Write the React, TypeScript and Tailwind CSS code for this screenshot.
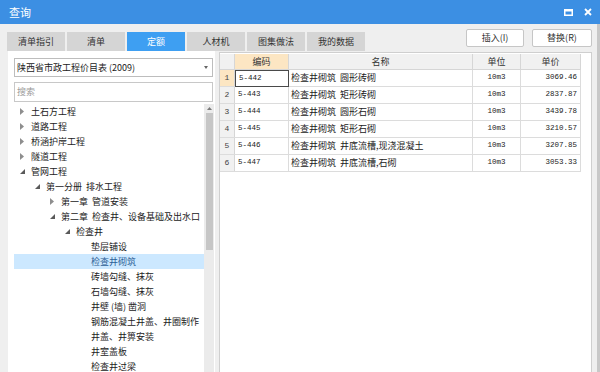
import React from 'react';

const cjk = { fontFamily: '"Noto Sans CJK SC", "Noto Sans", sans-serif' };
const mono = { fontFamily: '"Liberation Mono", "DejaVu Sans Mono", monospace' };

type Node = { label: string; level: number; arrow?: 'open' | 'closed'; selected?: boolean };

const tree: Node[] = [
  { label: '土石方工程', level: 0, arrow: 'closed' },
  { label: '道路工程', level: 0, arrow: 'closed' },
  { label: '桥涵护岸工程', level: 0, arrow: 'closed' },
  { label: '隧道工程', level: 0, arrow: 'closed' },
  { label: '管网工程', level: 0, arrow: 'open' },
  { label: '第一分册  排水工程', level: 1, arrow: 'open' },
  { label: '第一章  管道安装', level: 2, arrow: 'closed' },
  { label: '第二章  检查井、设备基础及出水口', level: 2, arrow: 'open' },
  { label: '检查井', level: 3, arrow: 'open' },
  { label: '垫层铺设', level: 4 },
  { label: '检查井砌筑', level: 4, selected: true },
  { label: '砖墙勾缝、抹灰', level: 4 },
  { label: '石墙勾缝、抹灰', level: 4 },
  { label: '井壁 (墙) 凿洞', level: 4 },
  { label: '钢筋混凝土井盖、井圈制作', level: 4 },
  { label: '井盖、井箅安装', level: 4 },
  { label: '井室盖板', level: 4 },
  { label: '检查井过梁', level: 4 },
];

const indent = ['pl-0', 'pl-[15px]', 'pl-[30px]', 'pl-[45px]', 'pl-[60px]'];

const rows = [
  { code: '5-442', name: '检查井砌筑  圆形砖砌', unit: '10m3', price: '3069.46' },
  { code: '5-443', name: '检查井砌筑  矩形砖砌', unit: '10m3', price: '2837.87' },
  { code: '5-444', name: '检查井砌筑  圆形石砌', unit: '10m3', price: '3439.78' },
  { code: '5-445', name: '检查井砌筑  矩形石砌', unit: '10m3', price: '3210.57' },
  { code: '5-446', name: '检查井砌筑  井底流槽,现浇混凝土', unit: '10m3', price: '3207.85' },
  { code: '5-447', name: '检查井砌筑  井底流槽,石砌', unit: '10m3', price: '3053.33' },
];

const tabs = ['清单指引', '清单', '定额', '人材机', '图集做法', '我的数据'];

function Arrow({ kind }: { kind?: 'open' | 'closed' }) {
  if (kind === 'closed')
    return (
      <svg width="4" height="7" viewBox="0 0 4 7">
        <path d="M0 0L4 3.5L0 7Z" fill="#8e8e8e" />
      </svg>
    );
  if (kind === 'open')
    return (
      <svg width="5" height="5" viewBox="0 0 5 5">
        <path d="M5 0L5 5L0 5Z" fill="#5a5a5a" />
      </svg>
    );
  return null;
}

export default function App() {
  return (
    <div className="w-[600px] h-[372px] overflow-hidden bg-[#efefef] flex flex-col" style={cjk}>
      {/* title bar */}
      <div className="h-[24px] shrink-0 bg-[#3c8fe3] flex items-center pl-[9px] pr-[8px] text-white text-[11px]">
        <span>查询</span>
        <div className="ml-auto flex items-center gap-[11px]">
          <svg width="9" height="7" viewBox="0 0 9 7">
            <rect x="0.75" y="0.75" width="7.5" height="5.5" fill="none" stroke="#fff" strokeWidth="1.5" />
            <rect x="0" y="0" width="9" height="2.5" fill="#fff" />
          </svg>
          <svg width="8" height="8" viewBox="0 0 8 8">
            <path d="M1 1L7 7M7 1L1 7" stroke="#fff" strokeWidth="1.8" />
          </svg>
        </div>
      </div>

      <div className="flex-1 flex flex-col border-r-[3px] border-[#c8c8c8] min-h-0">
        {/* tabs + buttons */}
        <div className="h-[27px] shrink-0 flex pl-[7px] pr-[5px]">
          <div className="flex items-end gap-[2px]">
            {tabs.map((t) => (
              <div
                key={t}
                className={
                  t === '定额'
                    ? 'w-[58px] h-[19px] flex items-center justify-center text-[9px] bg-[#3e9ff2] text-white'
                    : 'w-[58px] h-[19px] flex items-center justify-center text-[9px] bg-[#d5d5d5] text-[#333]'
                }
              >
                {t}
              </div>
            ))}
          </div>
          <div className="ml-auto flex items-start pt-[5px] gap-[8px]">
            <div className="w-[58px] h-[18px] bg-white border border-[#c6c6c6] rounded-[2px] flex items-center justify-center text-[9px] text-[#333]">
              插入(I)
            </div>
            <div className="w-[60px] h-[18px] bg-white border border-[#c6c6c6] rounded-[2px] flex items-center justify-center text-[9px] text-[#333]">
              替换(R)
            </div>
          </div>
        </div>

        {/* body */}
        <div className="flex-1 flex min-h-0 pl-[8px] pr-[5px] gap-[4px]">
          {/* left panel */}
          <div className="w-[207px] bg-white flex flex-col pt-[7px] pl-[6px] pr-[1px]">
            <div className="h-[19px] mr-[1px] border border-[#bdbdbd] flex items-center pl-[2px] pr-[4px] text-[9px] text-[#222]">
              <span>陕西省市政工程价目表 (2009)</span>
              <svg className="ml-auto" width="4" height="3" viewBox="0 0 4 3">
                <path d="M0 0L4 0L2 3Z" fill="#666" />
              </svg>
            </div>
            <div className="h-[20px] mr-[1px] mt-[5px] border border-[#c8c8c8] flex items-center pl-[2px] text-[9px] text-[#9a9a9a]">
              搜索
            </div>
            <div className="flex-1 flex mt-[2px] min-h-0">
              <div className="flex-1 flex flex-col">
                {tree.map((n) => (
                  <div
                    key={n.label}
                    className={`h-[15px] shrink-0 flex items-center text-[9px] ${indent[n.level]} ${
                      n.selected ? 'bg-[#cce8ff] text-[#2d5f96]' : 'text-[#222]'
                    }`}
                  >
                    <div className="w-[17px] shrink-0 flex items-center pl-[6px]">
                      <Arrow kind={n.arrow} />
                    </div>
                    <span className="whitespace-pre">{n.label}</span>
                  </div>
                ))}
              </div>
              <div className="w-[10px] bg-[#ebebeb] flex flex-col items-center">
                <svg className="mt-[3px]" width="5" height="3" viewBox="0 0 5 3">
                  <path d="M0 3L2.5 0L5 3Z" fill="#7a7a7a" />
                </svg>
                <div className="w-[7px] h-[137px] mt-[3px] bg-[#c6c6c6]" />
              </div>
            </div>
          </div>

          {/* right grid */}
          <div className="flex-1 bg-white border-l border-r border-t border-[#cfcfcf] mt-[1px] pt-[1px]">
            <div className="flex flex-col w-[361px] text-[#222]">
              <div className="h-[16px] flex text-[9px] text-[#333] bg-[#f1f1f1] border-b border-[#d6d6d6]">
                <div className="w-[15px] border-r border-[#d6d6d6]" />
                <div className="w-[54px] border-r border-[#d6d6d6] bg-[#fce6c3] flex items-center justify-center">编码</div>
                <div className="w-[184px] border-r border-[#d6d6d6] flex items-center justify-center">名称</div>
                <div className="w-[48px] border-r border-[#d6d6d6] flex items-center justify-center">单位</div>
                <div className="w-[60px] border-r border-[#d6d6d6] flex items-center justify-center">单价</div>
              </div>
              {rows.map((r, i) => (
                <div key={r.code} className="h-[17px] flex border-b border-[#dcdcdc]">
                  <div
                    className={`w-[15px] border-r border-[#d6d6d6] flex items-center justify-center text-[8px] text-[#444] ${
                      i === 0 ? 'bg-[#fce6c3]' : 'bg-[#f1f1f1]'
                    }`}
                    style={mono}
                  >
                    {i + 1}
                  </div>
                  <div
                    className={`w-[54px] flex items-center pl-[3px] text-[7.5px] ${
                      i === 0 ? 'border border-[#4a4a4a] -mb-px' : 'border-r border-[#dcdcdc]'
                    }`}
                    style={mono}
                  >
                    {r.code}
                  </div>
                  <div className="w-[184px] border-r border-[#dcdcdc] flex items-center pl-[2px] text-[9px] whitespace-pre overflow-hidden">
                    {r.name}
                  </div>
                  <div className="w-[48px] border-r border-[#dcdcdc] flex items-center justify-center text-[7.5px]" style={mono}>
                    {r.unit}
                  </div>
                  <div className="w-[60px] border-r border-[#dcdcdc] flex items-center justify-end pr-[3px] text-[7.5px]" style={mono}>
                    {r.price}
                  </div>
                </div>
              ))}
            </div>
          </div>
        </div>
      </div>
    </div>
  );
}
